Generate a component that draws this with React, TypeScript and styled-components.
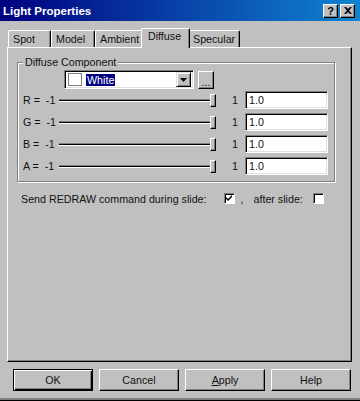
import styled, { createGlobalStyle } from 'styled-components'

const EstiloGlobal = createGlobalStyle`
  body {
    margin: 0;
    background: #c0c0c0;
  }
  * {
    box-sizing: border-box;
  }
`

const Ventana = styled.div`
  width: 360px;
  height: 401px;
  display: flex;
  flex-direction: column;
  background: #c0c0c0;
  font-family: "Liberation Sans", Arial, sans-serif;
  font-size: 10.7px;
  color: #111;
  border-bottom: 1px solid #000;
  box-shadow: inset 0 -2px 0 #808080;
  overflow: hidden;
`

const BarraTitulo = styled.div`
  height: 21px;
  flex: none;
  display: flex;
  align-items: center;
  justify-content: space-between;
  padding: 0 5px 0 3px;
  background: linear-gradient(to right, #000080, #1084d0);
  color: #fff;
  font-weight: bold;
  font-size: 11.5px;
`

const BotonesTitulo = styled.div`
  display: flex;
  gap: 2px;
`

const BotonTitulo = styled.div`
  width: 15px;
  height: 14px;
  display: flex;
  align-items: center;
  justify-content: center;
  background: #c0c0c0;
  color: #000;
  font-weight: bold;
  font-size: 11px;
  border-top: 1px solid #fff;
  border-left: 1px solid #fff;
  border-right: 1px solid #000;
  border-bottom: 1px solid #000;
  box-shadow: inset -1px -1px 0 #808080;
`

const Cuerpo = styled.div`
  flex: 1;
  display: flex;
  flex-direction: column;
  padding: 7px 8px 0 7px;
`

const TiraPestanas = styled.div`
  height: 19px;
  display: flex;
  align-items: flex-end;
  padding-left: 1px;
`

const Pestana = styled.div<{ $ancho: number; $activa?: boolean }>`
  position: relative;
  width: ${p => p.$activa ? p.$ancho + 4 : p.$ancho}px;
  height: ${p => p.$activa ? 20 : 17}px;
  margin: ${p => p.$activa ? '0 -2px -1px' : '0'};
  z-index: ${p => p.$activa ? 2 : 1};
  padding: ${p => p.$activa ? '1px 0 0 6px' : '2px 0 0 4px'};
  background: #c0c0c0;
  border-top: 1px solid #fff;
  border-left: 1px solid #fff;
  border-right: 1px solid #000;
  border-radius: 2px 2px 0 0;
  box-shadow: inset -1px 0 0 #808080;
  white-space: nowrap;
`

const Panel = styled.div`
  height: 315px;
  flex: none;
  display: flex;
  flex-direction: column;
  padding: 8px 9px 0 9px;
  border-top: 1px solid #fff;
  border-left: 1px solid #fff;
  border-right: 1px solid #000;
  border-bottom: 1px solid #000;
  box-shadow: inset -1px -1px 0 #808080;
`

const Grupo = styled.fieldset`
  margin: 0;
  width: 318px;
  padding: 0 6px 4px 5px;
  border: 1px solid #808080;
  box-shadow: inset 1px 1px 0 #fff, 1px 1px 0 #fff;
`

const Leyenda = styled.legend`
  padding: 0 2px;
  background: #c0c0c0;
  line-height: 13px;
`

const FilaCombo = styled.div`
  display: flex;
  align-items: center;
  gap: 4px;
  margin: 1px 0 0 41px;
`

const Combo = styled.div`
  width: 130px;
  height: 19px;
  display: flex;
  align-items: center;
  padding-left: 3px;
  background: #fff;
  border-top: 1px solid #808080;
  border-left: 1px solid #808080;
  border-right: 1px solid #fff;
  border-bottom: 1px solid #fff;
  box-shadow: inset 1px 1px 0 #000, inset -1px -1px 0 #dfdfdf;
`

const Muestra = styled.div`
  width: 14px;
  height: 13px;
  background: #fff;
  border: 1px solid #808080;
`

const Seleccion = styled.span`
  margin-left: 4px;
  padding: 0 1px;
  background: #000080;
  color: #fff;
  line-height: 12px;
`

const Flecha = styled.div`
  margin-left: auto;
  margin-right: 2px;
  width: 15px;
  height: 15px;
  display: flex;
  align-items: center;
  justify-content: center;
  background: #c0c0c0;
  border-top: 1px solid #dfdfdf;
  border-left: 1px solid #dfdfdf;
  border-right: 1px solid #000;
  border-bottom: 1px solid #000;
  box-shadow: inset 1px 1px 0 #fff, inset -1px -1px 0 #808080;
`

const BotonPuntos = styled.div`
  width: 16px;
  height: 18px;
  display: flex;
  align-items: flex-end;
  justify-content: center;
  padding-bottom: 2px;
  line-height: 8px;
  background: #c0c0c0;
  border-top: 1px solid #fff;
  border-left: 1px solid #fff;
  border-right: 1px solid #000;
  border-bottom: 1px solid #000;
  box-shadow: inset -1px -1px 0 #808080;
`

const FilaCanal = styled.div`
  height: 22px;
  display: flex;
  align-items: center;
`

const EtiquetaCanal = styled.div`
  width: 36px;
  white-space: pre;
`

const Deslizador = styled.div`
  width: 157px;
  height: 14px;
  display: flex;
  align-items: center;
`

const Pista = styled.div`
  flex: 1;
  height: 3px;
  background: #000;
  border-top: 1px solid #808080;
  border-bottom: 1px solid #fff;
`

const Tirador = styled.div`
  width: 6px;
  height: 13px;
  background: #c0c0c0;
  border-top: 1px solid #fff;
  border-left: 1px solid #fff;
  border-right: 1px solid #000;
  border-bottom: 1px solid #000;
  box-shadow: inset -1px -1px 0 #808080;
`

const Maximo = styled.div`
  width: 6px;
  margin-left: 16px;
`

const Campo = styled.div`
  width: 83px;
  height: 18px;
  margin-left: 7px;
  padding: 2px 0 0 3px;
  background: #fff;
  border-top: 1px solid #808080;
  border-left: 1px solid #808080;
  border-right: 1px solid #fff;
  border-bottom: 1px solid #fff;
  box-shadow: inset 1px 1px 0 #000, inset -1px -1px 0 #dfdfdf;
`

const FilaRedibujo = styled.div`
  display: flex;
  align-items: center;
  margin: 10px 0 0 4px;
  height: 13px;
`

const Casilla = styled.div<{ $margen: number }>`
  width: 11px;
  height: 11px;
  margin-left: ${p => p.$margen}px;
  display: flex;
  align-items: center;
  justify-content: center;
  background: #fff;
  border-top: 1px solid #808080;
  border-left: 1px solid #808080;
  border-right: 1px solid #fff;
  border-bottom: 1px solid #fff;
  box-shadow: inset 1px 1px 0 #000;
`

const Texto = styled.span<{ $margen?: number }>`
  margin-left: ${p => p.$margen ?? 0}px;
`

const FilaBotones = styled.div`
  display: flex;
  gap: 6px;
  margin: 7px 0 0 6px;
`

const Boton = styled.div<{ $porDefecto?: boolean }>`
  width: 80px;
  height: 22px;
  display: flex;
  align-items: center;
  justify-content: center;
  background: #c0c0c0;
  border: 1px solid #000;
  border-top-color: ${p => p.$porDefecto ? '#000' : '#fff'};
  border-left-color: ${p => p.$porDefecto ? '#000' : '#fff'};
  box-shadow: ${p => p.$porDefecto
    ? 'inset 1px 1px 0 #fff, inset -1px -1px 0 #000, inset -2px -2px 0 #808080'
    : 'inset -1px -1px 0 #808080'};
`

const canales = ['R', 'G', 'B', 'A']

const Visto = () => (
  <svg width="7" height="7" viewBox="0 0 7 7">
    <path d="M0 2 L2 4 L6 0 L6 2 L2 6 L0 4 Z" fill="#000" />
  </svg>
)

export default function App() {
  return (
    <>
      <EstiloGlobal />
      <Ventana>
        <BarraTitulo>
          <span>Light Properties</span>
          <BotonesTitulo>
            <BotonTitulo>?</BotonTitulo>
            <BotonTitulo>
              <svg width="8" height="7" viewBox="0 0 8 7">
                <path d="M0 0h2l2 2 2-2h2L5 3.5 8 7H6L4 5 2 7H0l3-3.5z" fill="#000" />
              </svg>
            </BotonTitulo>
          </BotonesTitulo>
        </BarraTitulo>
        <Cuerpo>
          <TiraPestanas>
            <Pestana $ancho={43}>Spot</Pestana>
            <Pestana $ancho={44}>Model</Pestana>
            <Pestana $ancho={48}>Ambient</Pestana>
            <Pestana $ancho={45} $activa>Diffuse</Pestana>
            <Pestana $ancho={52}>Specular</Pestana>
          </TiraPestanas>
          <Panel>
            <Grupo>
              <Leyenda>Diffuse Component</Leyenda>
              <FilaCombo>
                <Combo>
                  <Muestra />
                  <Seleccion>White</Seleccion>
                  <Flecha>
                    <svg width="7" height="4" viewBox="0 0 7 4">
                      <path d="M0 0h7L3.5 4z" fill="#000" />
                    </svg>
                  </Flecha>
                </Combo>
                <BotonPuntos>...</BotonPuntos>
              </FilaCombo>
              {canales.map(c => (
                <FilaCanal key={c}>
                  <EtiquetaCanal>{`${c} =  -1`}</EtiquetaCanal>
                  <Deslizador>
                    <Pista />
                    <Tirador />
                  </Deslizador>
                  <Maximo>1</Maximo>
                  <Campo>1.0</Campo>
                </FilaCanal>
              ))}
            </Grupo>
            <FilaRedibujo>
              <Texto>Send REDRAW command during slide:</Texto>
              <Casilla $margen={17}><Visto /></Casilla>
              <Texto $margen={6}>,</Texto>
              <Texto $margen={10}>after slide:</Texto>
              <Casilla $margen={10} />
            </FilaRedibujo>
          </Panel>
          <FilaBotones>
            <Boton $porDefecto>OK</Boton>
            <Boton>Cancel</Boton>
            <Boton><span><u>A</u>pply</span></Boton>
            <Boton>Help</Boton>
          </FilaBotones>
        </Cuerpo>
      </Ventana>
    </>
  )
}
